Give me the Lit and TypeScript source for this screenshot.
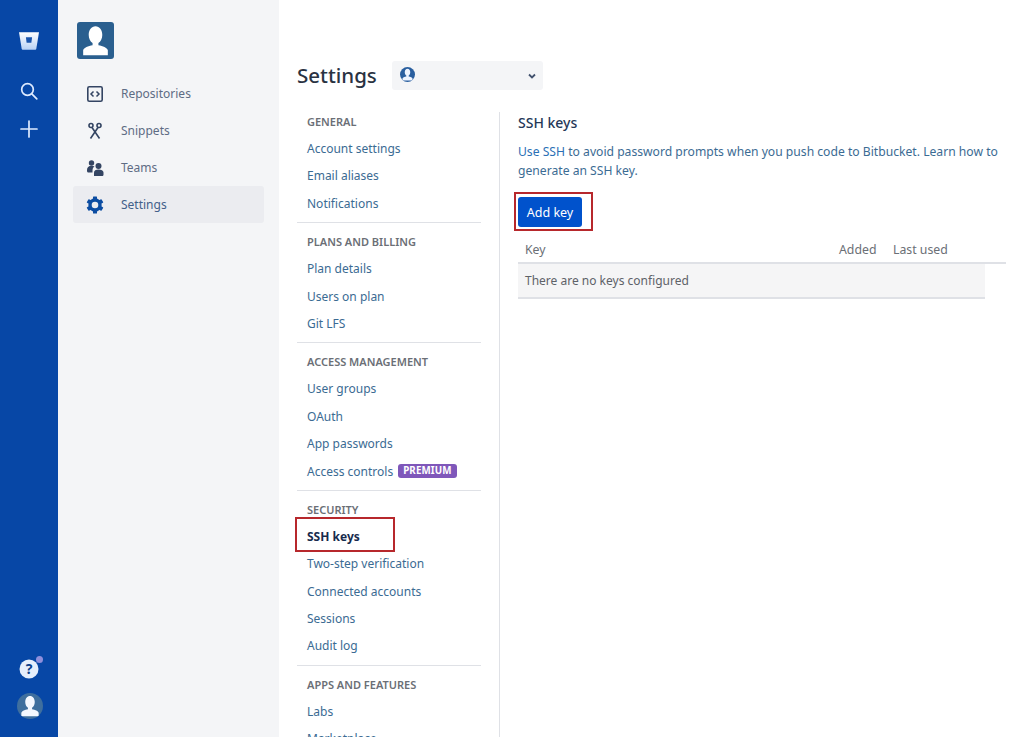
import { LitElement, html, css, svg } from "lit";
import { customElement } from "lit/decorators.js";

const person = svg`<path d="M12 2.800c-2.600 0-4.400 2.400-4.400 5.600 0 2.300 1 4.300 2.500 5.300v1.300c-2.800.5-5.600 1.500-6.100 3.300v3.200h16v-3.200c-.5-1.800-3.300-2.800-6.100-3.300v-1.300c1.500-1 2.500-3 2.500-5.300 0-3.200-1.800-5.600-4.400-5.600z" fill="currentColor"/>`;

const groups: { title: string; items: string[] }[] = [
  { title: "GENERAL", items: ["Account settings", "Email aliases", "Notifications"] },
  { title: "PLANS AND BILLING", items: ["Plan details", "Users on plan", "Git LFS"] },
  { title: "ACCESS MANAGEMENT", items: ["User groups", "OAuth", "App passwords", "Access controls"] },
  { title: "SECURITY", items: ["SSH keys", "Two-step verification", "Connected accounts", "Sessions", "Audit log"] },
  { title: "APPS AND FEATURES", items: ["Labs", "Marketplace"] },
];

@customElement("app-root")
export class AppRoot extends LitElement {
  static styles = css`
    :host {
      display: flex;
      height: 737px;
      overflow: hidden;
      background: #fff;
      font-family: "Noto Sans", "Open Sans", sans-serif;
      font-size: 12px;
      color: #42526e;
    }
    .rail {
      width: 58px;
      flex: none;
      background: #0747a6;
      color: #deebff;
      display: flex;
      flex-direction: column;
      align-items: center;
      padding: 31px 0 18px;
      box-sizing: border-box;
    }
    .rail svg { display: block; }
    .logo { margin-bottom: 30px; }
    .rail-search { margin-bottom: 18px; }
    .spacer { flex: 1; }
    .help { position: relative; margin-bottom: 14px; }
    .dot {
      position: absolute;
      top: -3px;
      right: -4px;
      width: 7px;
      height: 7px;
      border-radius: 50%;
      background: #8f8fdc;
    }
    .me {
      width: 26px;
      height: 26px;
      margin-left: 1px;
      border-radius: 50%;
      background: #3f6f9e;
      color: #f4f8ff;
      overflow: hidden;
    }
    .side {
      width: 221px;
      flex: none;
      box-sizing: border-box;
      background: #f4f5f7;
      padding: 22px 15px 0;
    }
    .avatar {
      width: 37px;
      height: 37px;
      margin: 0 0 16px 4px;
      border-radius: 3px;
      background: #2a5f8f;
      color: #fff;
    }
    .avatar svg { display: block; }
    .side-item {
      display: flex;
      align-items: center;
      height: 37px;
      border-radius: 3px;
      padding-left: 13px;
      gap: 17px;
      color: #5e6c84;
    }
    .side-item svg { flex: none; color: #344563; }
    .side-item.active { background: #ebecf0; color: #42608a; }
    .side-item.active svg { color: #0c4da2; }
    .main {
      flex: 1;
      min-width: 0;
      padding: 61px 18px 0;
      display: flex;
      flex-direction: column;
    }
    .head {
      display: flex;
      align-items: center;
      gap: 15px;
      height: 29px;
      margin-bottom: 22px;
    }
    h1 {
      margin: 0;
      font-size: 20.5px;
      font-weight: 500;
      color: #2a3242;
      line-height: 29px;
    }
    .select {
      width: 151px;
      height: 29px;
      box-sizing: border-box;
      background: #f4f5f7;
      border-radius: 3px;
      display: flex;
      align-items: center;
      justify-content: space-between;
      padding: 0 6px 0 8px;
    }
    .pick {
      width: 15px;
      height: 15px;
      border-radius: 50%;
      background: #2a5f9f;
      color: #eef4ff;
      overflow: hidden;
      margin-top: -3px;
    }
    .body { display: flex; flex: 1; min-height: 0; }
    nav { width: 184px; flex: none; margin-right: 18px; }
    .group { border-bottom: 1px solid #dfe1e6; padding: 3px 0 5px 10px; margin-bottom: 9px; }
    .group:last-child { border: 0; }
    .gt {
      font-size: 11px;
      font-weight: 600;
      color: #6b6f76;
      line-height: 14px;
      margin-bottom: 6px;
    }
    .link {
      height: 27.4px;
      line-height: 27.4px;
      color: #3b6b93;
      display: flex;
      align-items: center;
      gap: 5px;
      white-space: nowrap;
    }
    .link.current {
      position: relative;
      color: #172b4d;
      font-weight: 700;
    }
    .mark {
      position: absolute;
      border: 2px solid #b7282c;
      box-sizing: border-box;
      pointer-events: none;
    }
    .link .mark { left: -12px; top: -6px; width: 100px; height: 35px; }
    .badge {
      background: #7f57ba;
      color: #fff;
      font-size: 9.800px;
      font-weight: 700;
      line-height: 14px;
      padding: 0 5px;
      border-radius: 3px;
      letter-spacing: 0.1px;
    }
    .content {
      flex: 1;
      min-width: 0;
      border-left: 1px solid #dfe1e6;
      padding: 1px 0 0 18px;
    }
    h2 {
      margin: 0 0 10px;
      font-size: 14px;
      font-weight: 500;
      color: #253858;
      line-height: 20px;
    }
    p {
      margin: 0 0 17px;
      line-height: 18.5px;
      font-size: 12.150px;
      color: #3b6b93;
      white-space: nowrap;
    }
    p a { color: #2a6fb5; text-decoration: none; }
    .btn-wrap { position: relative; width: 64px; height: 30px; margin-bottom: 8px; }
    .btn {
      width: 64px;
      height: 30px;
      border: 0;
      border-radius: 3px;
      background: #0052cc;
      color: #fff;
      font: inherit;
      font-size: 12.5px;
      padding: 0;
    }
    .btn-wrap .mark { left: -4px; top: -5px; width: 79px; height: 39px; }
    .thead {
      display: flex;
      height: 26px;
      padding-top: 1px;
      align-items: center;
      padding-left: 7px;
      font-size: 12.3px;
      color: #6b6f76;
      border-bottom: 2px solid #dfe1e6;
      width: 481px;
    }
    .thead .k { flex: 1; }
    .thead .a { width: 54px; }
    .thead .l { width: 60px; margin-right: 53px; }
    .empty {
      width: 460px;
      padding-left: 7px;
      height: 33px;
      line-height: 33px;
      background: #f5f5f6;
      border-bottom: 2px solid #dfe1e6;
      color: #5e6268;
    }
  `;

  private link(item: string) {
    const cur = item === "SSH keys";
    return html`<div class="link ${cur ? "current" : ""}">
      ${item}${cur ? html`<span class="mark"></span>` : ""}
      ${item === "Access controls" ? html`<span class="badge">PREMIUM</span>` : ""}
    </div>`;
  }

  render() {
    return html`
      <div class="rail">
        <svg class="logo" width="22" height="20" viewBox="0 0 24 22">
          <defs><linearGradient id="b" x1="0" y1="0" x2="0" y2="1"><stop offset="0" stop-color="#ffffff"/><stop offset="1" stop-color="#b9d2f5"/></linearGradient></defs>
          <path d="M1 1.500h22l-3 18.200c-.1.5-.5.8-1 .8H5c-.5 0-.9-.3-1-.8z" fill="url(#b)"/>
          <path d="M8.600 7h6.800l-.8 6H9.400z" fill="#1a55ad"/>
        </svg>
        <svg class="rail-search" width="20" height="20" viewBox="0 0 20 20" fill="none" stroke="currentColor" stroke-width="1.700"><circle cx="8.500" cy="8.500" r="5.800"/><path d="M12.800 12.800l5 5" stroke-linecap="round"/></svg>
        <svg width="20" height="20" viewBox="0 0 20 20" fill="none" stroke="currentColor" stroke-width="1.700"><path d="M10 2v16M2 10h16" stroke-linecap="round"/></svg>
        <div class="spacer"></div>
        <div class="help">
          <svg width="20" height="20" viewBox="0 0 20 20"><circle cx="10" cy="10" r="9.500" fill="#e6effc"/><text x="10" y="15" text-anchor="middle" font-size="14" font-weight="700" font-family="Noto Sans" fill="#0d3f8a">?</text></svg>
          <span class="dot"></span>
        </div>
        <div class="me"><svg width="26" height="26" viewBox="0 0 24 24">${person}</svg></div>
      </div>
      <div class="side">
        <div class="avatar"><svg width="37" height="37" viewBox="0 0 24 24">${person}</svg></div>
        <div class="side-item">
          <svg width="18" height="18" viewBox="0 0 18 18" fill="none" stroke="currentColor"><rect x="1.800" y="1.800" width="14.400" height="14.400" rx="1.500" stroke-width="1.600"/><path d="M7.500 6.500L5 9l2.500 2.500M10.500 6.500L13 9l-2.500 2.500" stroke-width="1.500"/></svg>
          <span>Repositories</span>
        </div>
        <div class="side-item">
          <svg width="18" height="18" viewBox="0 0 18 18" fill="none" stroke="currentColor" stroke-width="1.600"><circle cx="5" cy="3.500" r="2"/><circle cx="13" cy="3.500" r="2"/><path d="M6 5.500L13.500 16.500M12 5.500L4.500 16.500"/></svg>
          <span>Snippets</span>
        </div>
        <div class="side-item">
          <svg width="18" height="18" viewBox="0 0 18 18" fill="currentColor"><circle cx="5.500" cy="4" r="2.700"/><path d="M1 11c0-2.500 1.600-4.300 4.500-4.300 1.300 0 2.300.3 3 .9C7 8.500 6.500 10 6.500 12v1.500H2.500C1.500 13.500 1 12.800 1 12z"/><circle cx="12.500" cy="7" r="3"/><path d="M8 17v-3.500c0-2 1.800-3 4.500-3s5 1 5 3V15.500c0 1-.6 1.500-1.500 1.500z"/></svg>
          <span>Teams</span>
        </div>
        <div class="side-item active">
          <svg width="18" height="18" viewBox="0 0 18 18"><circle cx="9" cy="9" r="5" fill="none" stroke="currentColor" stroke-width="3.400"/><g fill="currentColor"><rect x="7" y="0.500" width="4" height="3" rx=".5"/><rect x="7" y="14.500" width="4" height="3" rx=".5"/><rect x="7" y="0.500" width="4" height="3" rx=".5" transform="rotate(60 9 9)"/><rect x="7" y="0.500" width="4" height="3" rx=".5" transform="rotate(120 9 9)"/><rect x="7" y="0.500" width="4" height="3" rx=".5" transform="rotate(240 9 9)"/><rect x="7" y="0.500" width="4" height="3" rx=".5" transform="rotate(300 9 9)"/></g></svg>
          <span>Settings</span>
        </div>
      </div>
      <div class="main">
        <div class="head">
          <h1>Settings</h1>
          <div class="select">
            <div class="pick"><svg width="15" height="15" viewBox="0 0 24 24">${person}</svg></div>
            <svg width="10" height="10" viewBox="0 0 10 10" fill="none" stroke="#42526e" stroke-width="1.800"><path d="M2 3.500L5 6.500L8 3.500"/></svg>
          </div>
        </div>
        <div class="body">
          <nav>
            ${groups.map(
              (g) => html`<div class="group">
                <div class="gt">${g.title}</div>
                ${g.items.map((i) => this.link(i))}
              </div>`
            )}
          </nav>
          <div class="content">
            <h2>SSH keys</h2>
            <p><a>Use SSH</a> to avoid password prompts when you push code to Bitbucket. Learn how to<br />generate an SSH key.</p>
            <div class="btn-wrap">
              <button class="btn">Add key</button>
              <span class="mark"></span>
            </div>
            <div class="thead"><span class="k">Key</span><span class="a">Added</span><span class="l">Last used</span></div>
            <div class="empty">There are no keys configured</div>
          </div>
        </div>
      </div>
    `;
  }
}
